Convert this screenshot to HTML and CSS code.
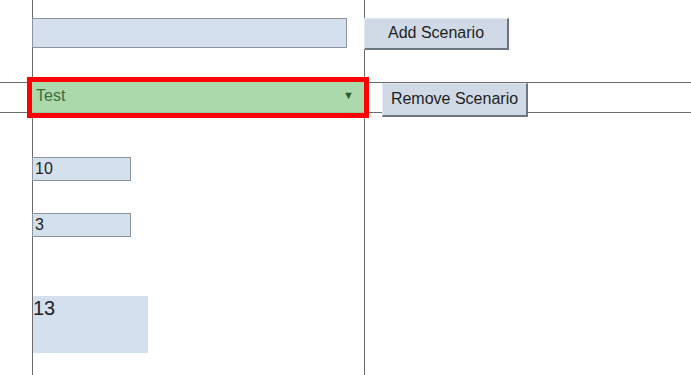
FILE: index.html
```html
<!DOCTYPE html>
<html lang="en">
<head>
    <meta charset="UTF-8">
    <meta name="viewport" content="width=device-width, initial-scale=1.0">
    <title>Scenarios</title>
    <link rel="stylesheet" href="styles.css">
</head>
<body>
    <div class="page">
        <div class="row row-top">
            <div class="cell-left">
                <input class="field name-field" type="text">
            </div>
            <div class="cell-right">
                <button class="scenario-button add-button">Add Scenario</button>
            </div>
        </div>

        <div class="row row-select">
            <div class="cell-left">
                <div class="select-wrap">
                    <select class="scenario-select">
                        <option>Test</option>
                    </select>
                    <span class="select-arrow">&#9660;</span>
                </div>
            </div>
            <div class="cell-right">
                <button class="scenario-button remove-button">Remove Scenario</button>
            </div>
        </div>

        <div class="row row-values">
            <div class="cell-left">
                <input class="field small-field first-field" type="text" value="10">
                <input class="field small-field" type="text" value="3">
                <div class="result">13</div>
            </div>
        </div>
    </div>
</body>
</html>
```

FILE: styles.css
```css
body {
    margin: 0;
    font-family: "Liberation Sans", Arial, sans-serif;
    font-size: 16px;
    color: #222222;
    background: #ffffff;
}

.page {
    min-height: 375px;
    /* the two column lines run the whole height */
    background:
        linear-gradient(#6b6b6b, #6b6b6b) 32px 0 / 1px 100% no-repeat,
        linear-gradient(#6b6b6b, #6b6b6b) 364px 0 / 1px 100% no-repeat;
}

.row {
    display: flex;
}

.cell-left {
    width: 332px;
    margin-left: 32px;
}

.cell-right {
    flex: 1;
}

.row-top {
    height: 82px;
}

.row-top .cell-left,
.row-top .cell-right {
    padding-top: 18px;
}

.row-select {
    height: 29px;
    border-top: 1px solid #6b6b6b;
    border-bottom: 1px solid #6b6b6b;
}

.field {
    display: block;
    box-sizing: border-box;
    margin: 0;
    padding: 0 2px;
    background: #d5e0ef;
    border: 1px solid #8c939b;
    font-family: inherit;
    font-size: 16px;
    color: #222222;
    outline: none;
}

.name-field {
    width: 315px;
    height: 30px;
}

.small-field {
    width: 99px;
    height: 24px;
    margin-top: 32px;
}

.first-field {
    margin-top: 44px;
}

.scenario-button {
    box-sizing: border-box;
    width: 145px;
    height: 32px;
    margin: 0;
    padding: 0 0 1px;
    background: #d0dae7;
    border-style: solid;
    border-width: 1px 2px 2px 1px;
    border-color: #e3e8ef #6d757e #6d757e #e3e8ef;
    font-family: inherit;
    font-size: 16px;
    color: #1e1e1e;
    cursor: pointer;
}

.remove-button {
    width: 146px;
    height: 34px;
    margin-top: 0;
    margin-left: 18px;
}

.select-wrap {
    position: relative;
    margin-top: -1px;
    width: 332px;
    height: 31px;
    outline: 5px solid #ff0000;
}

.scenario-select {
    appearance: none;
    -webkit-appearance: none;
    box-sizing: border-box;
    width: 100%;
    height: 100%;
    margin: 0;
    padding: 0 0 4px 4px;
    background: #acd9ab;
    border: none;
    border-bottom: 1px solid #9cc59b;
    font-family: inherit;
    font-size: 16px;
    color: #3b6a3b;
    outline: none;
}

.select-arrow {
    position: absolute;
    right: 10px;
    top: 7px;
    font-size: 11px;
    color: #2f5a2f;
    pointer-events: none;
}

.result {
    width: 115px;
    height: 57px;
    margin-top: 59px;
    margin-left: 1px;
    background: #d5e0ef;
    font-size: 20px;
    line-height: 24px;
}
```
